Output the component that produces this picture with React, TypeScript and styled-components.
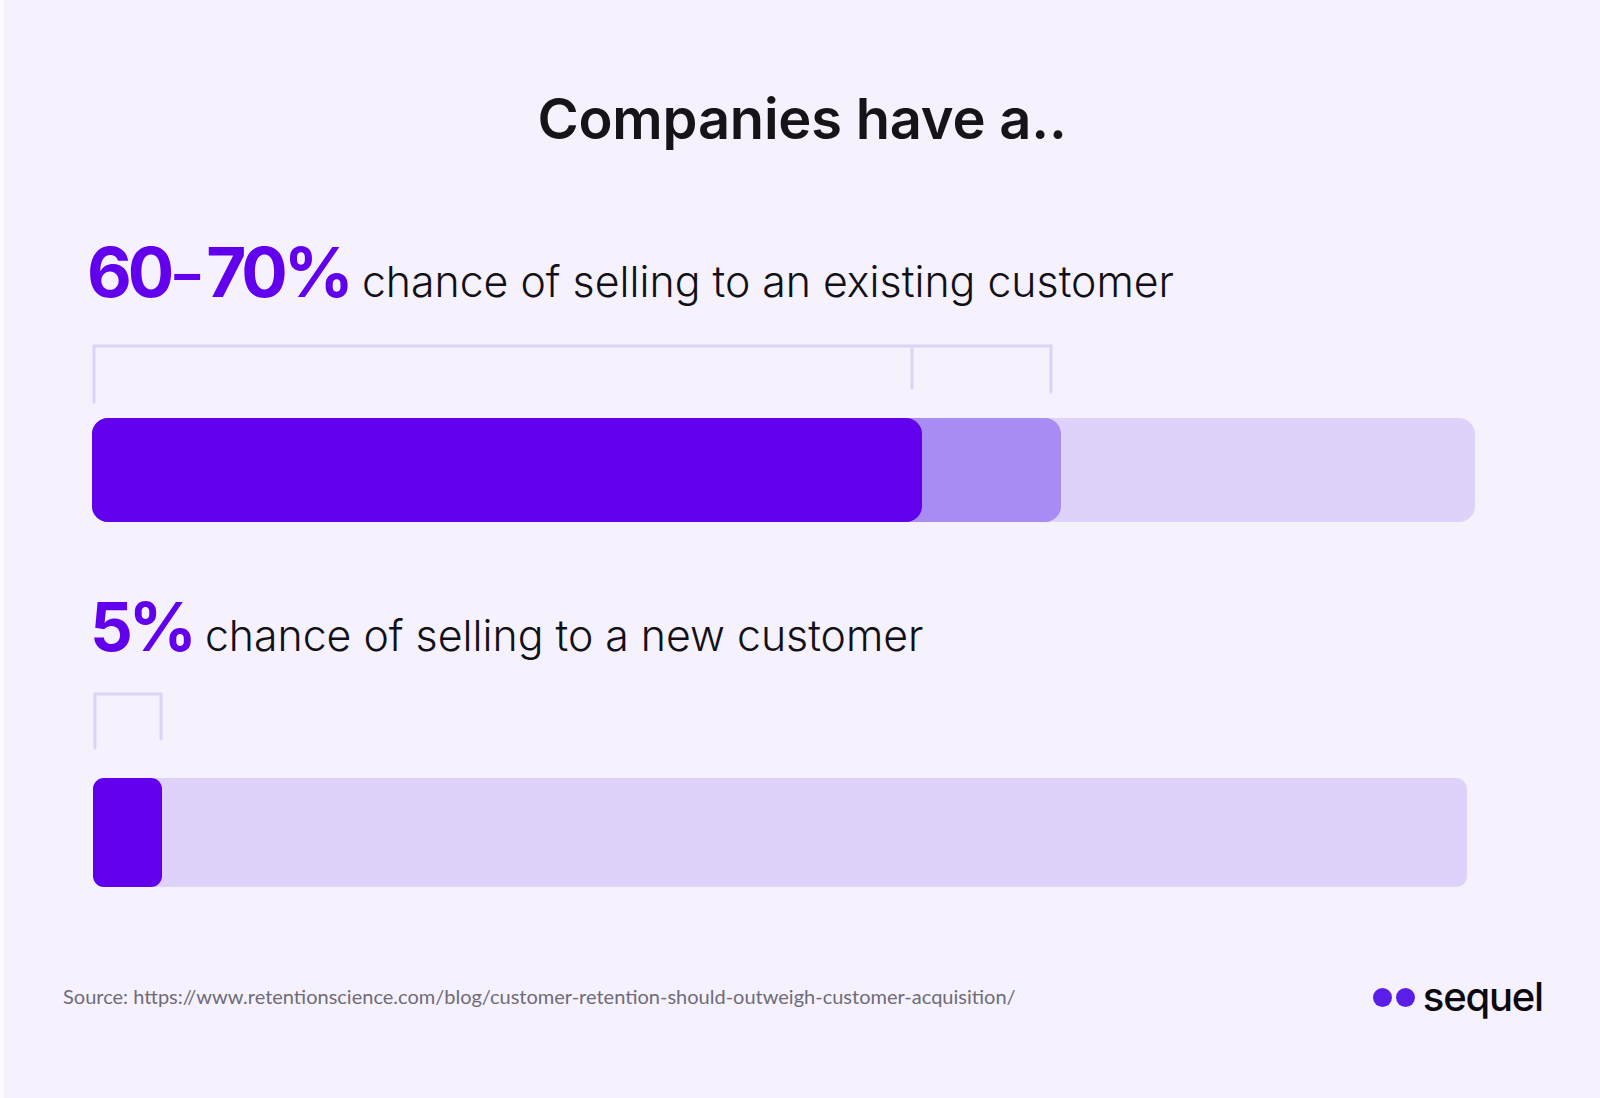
import React from "react";
import styled, { createGlobalStyle } from "styled-components";

const Global = createGlobalStyle`
  html, body { margin: 0; padding: 0; background: #f5f2fe; }
  * { box-sizing: border-box; }
`;

const Page = styled.div`
  width: 1600px;
  height: 1098px;
  background: #f5f2fe;
  border-left: 4px solid #fbfaff;
  display: flex;
  flex-direction: column;
  overflow: hidden;
`;

const Title = styled.h1`
  margin: 87px 0 0 0;
  font-family: "Inter", "Noto Sans", sans-serif;
  font-weight: 600;
  font-size: 56px;
  line-height: 64px;
  letter-spacing: -0.2px;
  color: #161418;
  text-align: center;
`;

const StatRow = styled.div<{ $top: number; $left: number }>`
  display: flex;
  align-items: baseline;
  gap: 12px;
  margin-top: ${(p) => p.$top}px;
  padding-left: ${(p) => p.$left}px;
`;

const Figure = styled.span<{ $size: number }>`
  font-family: "Inter", "Noto Sans", sans-serif;
  font-weight: 700;
  font-size: ${(p) => p.$size}px;
  line-height: 80px;
  letter-spacing: -4px;
  color: #6200ee;
`;

const Dash = styled.span`
  display: inline-block;
  font-size: 0.75em;
  letter-spacing: 0;
  margin: 0 6px 0 4px;
  vertical-align: 0.1em;
`;

const Caption = styled.span`
  font-family: "Inter", "Noto Sans", sans-serif;
  font-weight: 300;
  font-size: 42.8px;
  line-height: 80px;
  color: #121016;
`;

const BracketSvg = styled.svg<{ $top: number; $left: number }>`
  display: block;
  margin-top: ${(p) => p.$top}px;
  margin-left: ${(p) => p.$left}px;
  overflow: visible;
`;

const Track = styled.div<{ $top: number; $left: number; $width: number; $height: number; $radius: number }>`
  margin-top: ${(p) => p.$top}px;
  margin-left: ${(p) => p.$left}px;
  width: ${(p) => p.$width}px;
  height: ${(p) => p.$height}px;
  border-radius: ${(p) => p.$radius}px;
  background: #ded2fa;
  display: flex;
`;

const Fill = styled.div<{ $tone: "strong" | "soft"; $radius: number }>`
  height: 100%;
  border-radius: ${(p) => p.$radius}px;
  background: ${(p) => (p.$tone === "strong" ? "#6200ee" : "#a98cf3")};
  display: flex;
  flex-shrink: 0;
`;

const Footer = styled.div`
  margin-top: 81px;
  padding: 0 57px 0 59px;
  display: flex;
  justify-content: space-between;
  align-items: flex-start;
`;

const Source = styled.p`
  margin: 16px 0 0 0;
  font-family: "Lato", "Noto Sans", sans-serif;
  font-size: 20px;
  line-height: 24px;
  color: #6f6b78;
`;

const Logo = styled.div`
  margin-top: 9px;
  display: flex;
  align-items: center;
  gap: 4px;
`;

const Dot = styled.span`
  width: 19px;
  height: 19px;
  border-radius: 50%;
  background: #5b1ee8;
`;

const LogoWord = styled.span`
  margin-left: 4px;
  font-family: "Inter", "Noto Sans", sans-serif;
  font-weight: 500;
  font-size: 40px;
  line-height: 40px;
  letter-spacing: -1.2px;
  color: #0c0a10;
`;

const stroke = "#dcd3f5";

export default function App() {
  return (
    <>
      <Global />
      <Page>
        <Title>Companies have a..</Title>

        <StatRow $top={81} $left={83}>
          <Figure $size={69}>
            60<Dash>–</Dash>70%
          </Figure>
          <Caption>chance of selling to an existing customer</Caption>
        </StatRow>

        <BracketSvg $top={22} $left={88} width={962} height={60} viewBox="0 0 962 60">
          <g stroke={stroke} strokeWidth={3} strokeLinecap="round" fill="none">
            <path d="M2 58 V2 H959 V48" />
            <path d="M820 2 V44" />
          </g>
        </BracketSvg>

        <Track $top={14} $left={88} $width={1383} $height={104} $radius={16}>
          <Fill $tone="soft" $radius={16} style={{ width: `${(969 / 1383) * 100}%` }}>
            <Fill $tone="strong" $radius={16} style={{ width: `${(830 / 969) * 100}%` }} />
          </Fill>
        </Track>

        <StatRow $top={65} $left={86}>
          <Figure $size={67}>5%</Figure>
          <Caption>chance of selling to a new customer</Caption>
        </StatRow>

        <BracketSvg $top={16} $left={89} width={70} height={57} viewBox="0 0 70 57">
          <g stroke={stroke} strokeWidth={3} strokeLinecap="round" fill="none">
            <path d="M2 56 V2 H68 V47" />
          </g>
        </BracketSvg>

        <Track $top={29} $left={89} $width={1374} $height={109} $radius={11}>
          <Fill $tone="strong" $radius={11} style={{ width: `${(69 / 1374) * 100}%` }} />
        </Track>

        <Footer>
          <Source>
            Source: https://www.retentionscience.com/blog/customer-retention-should-outweigh-customer-acquisition/
          </Source>
          <Logo>
            <Dot />
            <Dot />
            <LogoWord>sequel</LogoWord>
          </Logo>
        </Footer>
      </Page>
    </>
  );
}
